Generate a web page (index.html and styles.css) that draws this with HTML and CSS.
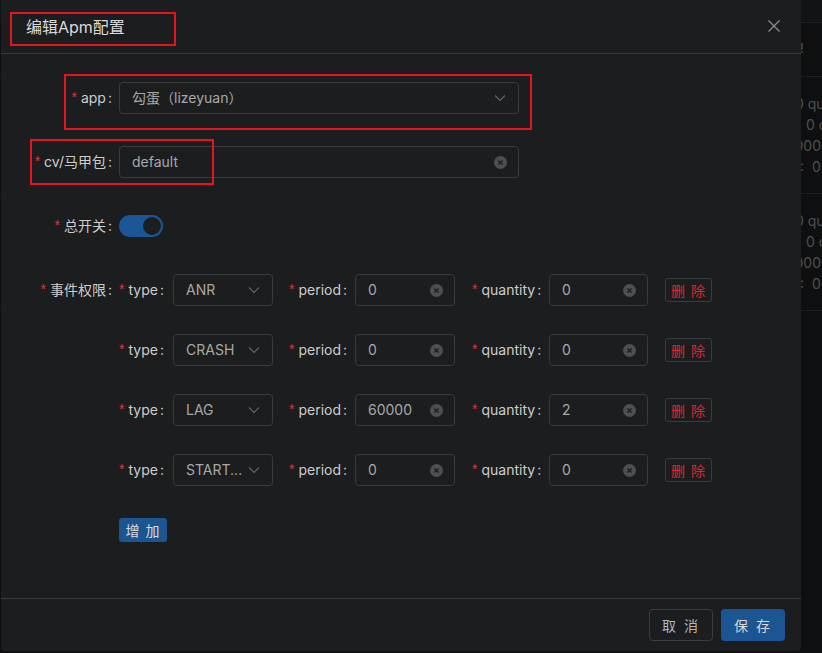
FILE: index.html
```html
<!DOCTYPE html>
<html lang="zh-CN">
<head>
<meta charset="utf-8">
<title>编辑Apm配置</title>
<link rel="stylesheet" href="styles.css">
</head>
<body>
<div class="bg-table">
  <div class="bg-top"></div>
  <div class="bg-row bg-head"><span class="bg-tick">!</span></div>
  <div class="bg-row bg-data">
    <div class="bg-line l1">0 qu</div>
    <div class="bg-line l2">0 c</div>
    <div class="bg-line l3">60000</div>
    <div class="bg-line l4">:&nbsp;&nbsp;0</div>
  </div>
  <div class="bg-row bg-data">
    <div class="bg-line l1">0 qu</div>
    <div class="bg-line l2">0 c</div>
    <div class="bg-line l3">60000</div>
    <div class="bg-line l4">:&nbsp;&nbsp;0</div>
  </div>
</div>

<div class="modal">
  <div class="modal-header">
    <div class="modal-title">编辑Apm配置</div>
    <span class="close-btn">
      <svg width="14" height="14" viewBox="0 0 14 14"><path d="M1.5 1.5 L12.5 12.5 M12.5 1.5 L1.5 12.5" stroke="#8c8c8c" stroke-width="1.3" fill="none"/></svg>
    </span>
  </div>

  <div class="modal-body">
    <div class="form-item">
      <div class="form-label"><span class="req">*</span>app<span class="colon">:</span></div>
      <div class="select wide"><span class="val">勾蛋（lizeyuan）</span>
        <svg class="arrow" width="12" height="8" viewBox="0 0 12 8"><path d="M1 1.5 L6 6.5 L11 1.5" stroke="#666" stroke-width="1.1" fill="none"/></svg>
      </div>
    </div>

    <div class="form-item">
      <div class="form-label"><span class="req">*</span>cv/马甲包<span class="colon">:</span></div>
      <div class="input wide"><span class="val">default</span>
        <svg class="clear" width="13" height="13" viewBox="0 0 14 14"><circle cx="7" cy="7" r="7" fill="#4e4f51"/><path d="M4.8 4.8 L9.2 9.2 M9.2 4.8 L4.8 9.2" stroke="#1c1d1f" stroke-width="1.4"/></svg>
      </div>
    </div>

    <div class="form-item">
      <div class="form-label"><span class="req">*</span>总开关<span class="colon">:</span></div>
      <div class="switch-wrap"><span class="switch"><span class="knob"></span></span></div>
    </div>

    <div class="form-item event-item">
      <div class="form-label"><span class="req">*</span>事件权限<span class="colon">:</span></div>
      <div class="event-list">
        <div class="event-row">
          <div class="sub-item"><div class="sub-label lt"><span class="req">*</span>type<span class="colon">:</span></div>
            <div class="select small"><span class="val">ANR</span><svg class="arrow" width="12" height="8" viewBox="0 0 12 8"><path d="M1 1.5 L6 6.5 L11 1.5" stroke="#666" stroke-width="1.1" fill="none"/></svg></div></div>
          <div class="sub-item"><div class="sub-label lp"><span class="req">*</span>period<span class="colon">:</span></div>
            <div class="input small"><span class="val">0</span><svg class="clear" width="13" height="13" viewBox="0 0 14 14"><circle cx="7" cy="7" r="7" fill="#4e4f51"/><path d="M4.8 4.8 L9.2 9.2 M9.2 4.8 L4.8 9.2" stroke="#1c1d1f" stroke-width="1.4"/></svg></div></div>
          <div class="sub-item"><div class="sub-label lq"><span class="req">*</span>quantity<span class="colon">:</span></div>
            <div class="input small q"><span class="val">0</span><svg class="clear" width="13" height="13" viewBox="0 0 14 14"><circle cx="7" cy="7" r="7" fill="#4e4f51"/><path d="M4.8 4.8 L9.2 9.2 M9.2 4.8 L4.8 9.2" stroke="#1c1d1f" stroke-width="1.4"/></svg></div></div>
          <span class="btn-del">删 除</span>
        </div>
        <div class="event-row">
          <div class="sub-item"><div class="sub-label lt"><span class="req">*</span>type<span class="colon">:</span></div>
            <div class="select small"><span class="val">CRASH</span><svg class="arrow" width="12" height="8" viewBox="0 0 12 8"><path d="M1 1.5 L6 6.5 L11 1.5" stroke="#666" stroke-width="1.1" fill="none"/></svg></div></div>
          <div class="sub-item"><div class="sub-label lp"><span class="req">*</span>period<span class="colon">:</span></div>
            <div class="input small"><span class="val">0</span><svg class="clear" width="13" height="13" viewBox="0 0 14 14"><circle cx="7" cy="7" r="7" fill="#4e4f51"/><path d="M4.8 4.8 L9.2 9.2 M9.2 4.8 L4.8 9.2" stroke="#1c1d1f" stroke-width="1.4"/></svg></div></div>
          <div class="sub-item"><div class="sub-label lq"><span class="req">*</span>quantity<span class="colon">:</span></div>
            <div class="input small q"><span class="val">0</span><svg class="clear" width="13" height="13" viewBox="0 0 14 14"><circle cx="7" cy="7" r="7" fill="#4e4f51"/><path d="M4.8 4.8 L9.2 9.2 M9.2 4.8 L4.8 9.2" stroke="#1c1d1f" stroke-width="1.4"/></svg></div></div>
          <span class="btn-del">删 除</span>
        </div>
        <div class="event-row">
          <div class="sub-item"><div class="sub-label lt"><span class="req">*</span>type<span class="colon">:</span></div>
            <div class="select small"><span class="val">LAG</span><svg class="arrow" width="12" height="8" viewBox="0 0 12 8"><path d="M1 1.5 L6 6.5 L11 1.5" stroke="#666" stroke-width="1.1" fill="none"/></svg></div></div>
          <div class="sub-item"><div class="sub-label lp"><span class="req">*</span>period<span class="colon">:</span></div>
            <div class="input small"><span class="val">60000</span><svg class="clear" width="13" height="13" viewBox="0 0 14 14"><circle cx="7" cy="7" r="7" fill="#4e4f51"/><path d="M4.8 4.8 L9.2 9.2 M9.2 4.8 L4.8 9.2" stroke="#1c1d1f" stroke-width="1.4"/></svg></div></div>
          <div class="sub-item"><div class="sub-label lq"><span class="req">*</span>quantity<span class="colon">:</span></div>
            <div class="input small q"><span class="val">2</span><svg class="clear" width="13" height="13" viewBox="0 0 14 14"><circle cx="7" cy="7" r="7" fill="#4e4f51"/><path d="M4.8 4.8 L9.2 9.2 M9.2 4.8 L4.8 9.2" stroke="#1c1d1f" stroke-width="1.4"/></svg></div></div>
          <span class="btn-del">删 除</span>
        </div>
        <div class="event-row">
          <div class="sub-item"><div class="sub-label lt"><span class="req">*</span>type<span class="colon">:</span></div>
            <div class="select small"><span class="val">START...</span><svg class="arrow" width="12" height="8" viewBox="0 0 12 8"><path d="M1 1.5 L6 6.5 L11 1.5" stroke="#666" stroke-width="1.1" fill="none"/></svg></div></div>
          <div class="sub-item"><div class="sub-label lp"><span class="req">*</span>period<span class="colon">:</span></div>
            <div class="input small"><span class="val">0</span><svg class="clear" width="13" height="13" viewBox="0 0 14 14"><circle cx="7" cy="7" r="7" fill="#4e4f51"/><path d="M4.8 4.8 L9.2 9.2 M9.2 4.8 L4.8 9.2" stroke="#1c1d1f" stroke-width="1.4"/></svg></div></div>
          <div class="sub-item"><div class="sub-label lq"><span class="req">*</span>quantity<span class="colon">:</span></div>
            <div class="input small q"><span class="val">0</span><svg class="clear" width="13" height="13" viewBox="0 0 14 14"><circle cx="7" cy="7" r="7" fill="#4e4f51"/><path d="M4.8 4.8 L9.2 9.2 M9.2 4.8 L4.8 9.2" stroke="#1c1d1f" stroke-width="1.4"/></svg></div></div>
          <span class="btn-del">删 除</span>
        </div>
        <div class="add-row"><span class="btn-add">增 加</span></div>
      </div>
    </div>
  </div>

  <div class="modal-footer">
    <span class="btn btn-cancel">取 消</span>
    <span class="btn btn-save">保 存</span>
  </div>

  <div class="mark mark-title"></div>
  <div class="mark mark-app"></div>
  <div class="mark mark-cv"></div>
</div>
</body>
</html>
```

FILE: styles.css
```css
* { box-sizing: border-box; }

html, body {
  margin: 0;
  padding: 0;
  width: 822px;
  height: 653px;
  overflow: hidden;
  background: #0e0f10;
  font-family: Inter, "Noto Sans CJK SC", sans-serif;
  font-size: 14px;
  color: #cfcfcf;
}

/* background page behind the modal */
.bg-table {
  position: absolute;
  left: 0;
  top: 0;
  width: 822px;
  display: flex;
  flex-direction: column;
  color: #4f5052;
}
.bg-top { height: 23px; background: #121314; border-bottom: 1px solid #1e1f21; }
.bg-row { border-bottom: 1px solid #1e1f21; }
.bg-head { height: 54px; position: relative; }
.bg-tick { position: absolute; left: 800px; top: 17px; font-size: 13px; color: #555; }
.bg-data { height: 117px; padding-top: 16px; }
.bg-line { height: 21px; line-height: 21px; white-space: nowrap; font-size: 14px; }
.bg-line.l1 { padding-left: 795px; }
.bg-line.l2 { padding-left: 806px; }
.bg-line.l3 { padding-left: 777px; }
.bg-line.l4 { padding-left: 800px; }

/* modal */
.modal {
  position: absolute;
  left: 1px;
  top: 0;
  width: 800px;
  height: 651px;
  background: #1c1d1f;
  border-radius: 0 0 4px 4px;
  display: flex;
  flex-direction: column;
}

.modal-header {
  height: 54px;
  border-bottom: 1px solid #37383a;
  display: flex;
  align-items: center;
  justify-content: space-between;
  padding: 0 20px 0 25px;
}
.modal-title {
  font-size: 16px;
  font-weight: 400;
  color: #dadada;
  padding-bottom: 1px;
}
.close-btn { display: flex; width: 14px; height: 14px; margin-top: -1px; }

.modal-body {
  flex: 1;
  padding-top: 28px;
  display: flex;
  flex-direction: column;
}

.form-item {
  display: flex;
  align-items: flex-start;
  margin-bottom: 32px;
}
.form-label {
  width: 118px;
  height: 32px;
  line-height: 31px;
  text-align: right;
  white-space: nowrap;
  color: #cdcdcd;
}
.req {
  color: #d8393f;
  font-family: "Liberation Sans", sans-serif;
  font-size: 14px;
  margin-right: 4px;
  position: relative;
  top: -1px;
}
.colon { margin: 0 7px 0 2px; }

.select, .input {
  height: 32px;
  border: 1px solid #3a3b3d;
  border-radius: 4px;
  display: flex;
  align-items: center;
  justify-content: space-between;
  padding: 0 11px 0 12px;
  color: #a8a8a8;
  white-space: nowrap;
  line-height: 1;
}
.val { overflow: hidden; padding-bottom: 1px; }
.wide { width: 400px; }
.small { width: 100px; }
.small.q { width: 99px; }
.arrow { flex: none; margin-right: 1px; }
.clear { flex: none; }

.switch-wrap { height: 32px; display: flex; align-items: center; }
.switch {
  width: 44px;
  height: 22px;
  border-radius: 11px;
  background: #1b5796;
  display: flex;
  align-items: center;
  justify-content: flex-end;
  padding: 0 2px;
}
.knob {
  width: 18px;
  height: 18px;
  border-radius: 50%;
  background: #1c1d1f;
}

.event-list {
  display: flex;
  flex-direction: column;
  gap: 28px;
}
.event-row {
  display: flex;
  align-items: center;
  height: 32px;
}
.sub-item { display: flex; align-items: center; }
.sub-item + .sub-item { margin-left: 16px; }
.sub-item:nth-child(3) { margin-left: 17px; }
.sub-label {
  text-align: left;
  white-space: nowrap;
  color: #cdcdcd;
  padding-bottom: 1px;
}
.sub-label .colon { margin: 0 0 0 2px; }
.lt { width: 54px; }
.lp { width: 66px; }
.lq { width: 77px; }

.btn-del {
  margin-left: 17px;
  width: 47px;
  height: 24px;
  border: 1px solid #3a3b3d;
  border-radius: 3px;
  color: #e0252f;
  display: flex;
  align-items: center;
  justify-content: center;
  font-size: 14px;
  letter-spacing: 1px;
}

.add-row { margin-top: 4px; }
.btn-add {
  display: inline-flex;
  align-items: center;
  justify-content: center;
  width: 48px;
  height: 24px;
  background: #1b5592;
  border-radius: 3px;
  color: #dcdcdc;
  letter-spacing: 1px;
}

.modal-footer {
  height: 53px;
  border-top: 1px solid #37383a;
  display: flex;
  justify-content: flex-end;
  align-items: center;
  gap: 8px;
  padding: 0 16px;
}
.btn {
  width: 64px;
  height: 32px;
  border-radius: 4px;
  display: flex;
  align-items: center;
  justify-content: center;
  letter-spacing: 2px;
}
.btn-cancel { border: 1px solid #3c3d3f; color: #b5b5b5; }
.btn-save { background: #1b5592; color: #d8d8d8; }

/* red annotation boxes drawn over the dialog */
.mark {
  position: absolute;
  border: 2px solid #e3161e;
  pointer-events: none;
}
.mark-title { left: 9px; top: 12px; width: 166px; height: 34px; }
.mark-app { left: 63px; top: 74px; width: 468px; height: 56px; }
.mark-cv { left: 29px; top: 139px; width: 184px; height: 46px; }
```
